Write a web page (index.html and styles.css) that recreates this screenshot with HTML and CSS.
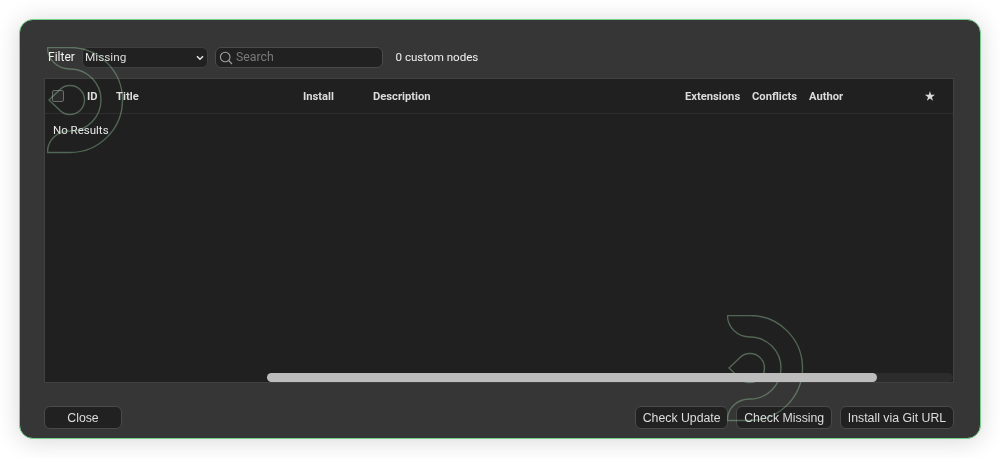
FILE: index.html
```html
<!DOCTYPE html>
<html lang="en">
<head>
<meta charset="utf-8">
<title>Custom Nodes Manager</title>
<link rel="stylesheet" href="styles.css">
</head>
<body>
<div class="dialog">
  <div class="toolbar">
    <span class="filter-label">Filter</span>
    <div class="select-wrap">
      <select class="filter-select"><option>Missing</option></select>
      <svg class="chevron" viewBox="0 0 8 6" width="8" height="6"><path d="M1 1.2 L4 4.2 L7 1.2"/></svg>
    </div>
    <label class="search">
      <svg class="search-icon" viewBox="0 0 14 14" width="14" height="14"><circle cx="6.2" cy="6" r="4.8"/><path d="M9.7 9.5 L13 13"/></svg>
      <input class="search-input" type="text" placeholder="Search">
    </label>
    <span class="count">0 custom nodes</span>
  </div>
  <div class="table">
    <div class="thead">
      <span class="cell"><span class="check"></span></span>
      <span class="cell">ID</span>
      <span class="cell">Title</span>
      <span class="cell">Install</span>
      <span class="cell">Description</span>
      <span class="cell">Extensions</span>
      <span class="cell">Conflicts</span>
      <span class="cell">Author</span>
      <span class="cell">★</span>
    </div>
    <div class="tbody"><div class="empty">No Results</div></div>
    <div class="scrolltrack"><div class="scrollthumb"></div><div class="scrollrest"></div></div>
  </div>
  <div class="footer">
    <button class="btn btn-close">Close</button>
    <div class="footer-right">
      <button class="btn">Check Update</button>
      <button class="btn">Check Missing</button>
      <button class="btn">Install via Git URL</button>
    </div>
  </div>
  <svg class="logo logo-top" viewBox="0 0 77 107" width="77" height="107"><use href="#logo-shape"/></svg>
  <svg class="logo logo-bottom" viewBox="0 0 77 107" width="77" height="107">
    <g id="logo-shape">
      <path d="M0.5 0.5 H23 A52.5 52.5 0 0 1 23 105.5 H0.5 C0.5 93 10 84 23 84 A31 31 0 0 0 23 22 C10 22 0.5 12 0.5 0.5 Z"/>
      <path d="M2 53 L12 43.5 C15 40 19 38.5 23 38.5 A14.5 14.5 0 0 1 23 67.5 C19 67.5 15 66 12 62.5 Z"/>
    </g>
  </svg>
</div>
</body>
</html>
```
FILE: styles.css
```css
* { box-sizing: border-box; }
html, body { margin: 0; height: 100%; }
body {
  background: #fff;
  padding: 19px 19px 18px 19px;
  font-family: Roboto, "Liberation Sans", Arial, sans-serif;
  font-size: 12px;
  color: #eee;
  overflow: hidden;
}
.dialog {
  position: relative;
  height: 420px;
  background: #363636;
  border: 1px solid #74d08c;
  border-radius: 14px;
  box-shadow: 0 2px 24px rgba(0, 0, 0, 0.16);
  padding: 27px 26px 9px 24px;
  display: flex;
  flex-direction: column;
  filter: blur(0.25px);
}
.toolbar {
  display: flex;
  align-items: center;
  height: 21px;
}
.filter-label { width: 38px; padding: 0 0 2px 4px; color: #f2f2f2; white-space: nowrap; }
.select-wrap { position: relative; width: 126px; height: 21px; }
.filter-select {
  appearance: none;
  width: 100%;
  height: 100%;
  background: #212121;
  color: #ddd;
  border: 1px solid #3f3f3f;
  border-radius: 6px;
  font: inherit;
  font-size: 11.8px;
  padding: 0 0 1px 2px;
  outline: none;
}
.chevron {
  position: absolute;
  right: 4px;
  top: 8px;
  fill: none;
  stroke: #e6e6e6;
  stroke-width: 1.5;
  pointer-events: none;
}
.search {
  margin-left: 7px;
  width: 168px;
  height: 21px;
  display: flex;
  align-items: center;
  gap: 3px;
  padding-left: 3px;
  background: #212121;
  border: 1px solid #4a4a4a;
  border-radius: 6px;
}
.search-icon { flex: none; fill: none; stroke: #a0a0a0; stroke-width: 1.1; }
.search-input {
  flex: 1;
  min-width: 0;
  background: none;
  border: none;
  outline: none;
  padding: 0 0 1px;
  font: inherit;
  font-size: 12.3px;
  color: #ddd;
}
.search-input::placeholder { color: #7a7a7a; }
.count { margin-left: 12.5px; padding-bottom: 2px; font-size: 11.6px; color: #f0f0f0; }
.table {
  margin-top: 10px;
  height: 306px;
  background: #202020;
  border: 1px solid #414141;
  display: flex;
  flex-direction: column;
}
.thead {
  height: 35px;
  flex: none;
  display: grid;
  grid-template-columns: 35px 29px 187px 70px 312px 67px 57px 116px 35px;
  align-items: center;
  border-bottom: 1px solid #2e2e2e;
  font-size: 11.2px;
  font-weight: 700;
  color: #dcdcdc;
}
.cell { padding-left: 7px; display: flex; align-items: center; }
.check {
  width: 12px;
  height: 12px;
  background: #2b2b2b;
  border: 1px solid #6b6b6b;
  border-radius: 2px;
}
.tbody { flex: 1; padding: 9px 8px; }
.empty { font-size: 11.5px; color: #eaeaea; }
.scrolltrack {
  flex: none;
  height: 9px;
  padding-left: 222px;
  display: flex;
}
.scrollthumb {
  position: relative;
  z-index: 1;
  flex: none;
  width: 610px;
  background: #bdbdbd;
  border-radius: 5px;
}
.scrollrest {
  flex: 1;
  margin-left: -5px;
  background: #2c2c2c;
  border-radius: 0 5px 5px 0;
}
.footer {
  margin-top: 23px;
  display: flex;
  justify-content: space-between;
}
.footer-right { display: flex; gap: 8px; }
.btn {
  height: 23px;
  padding: 0 6.8px;
  background: #212121;
  color: #ddd;
  border: 1px solid #4a4a4a;
  border-radius: 6px;
  font-family: "Liberation Sans", Arial, sans-serif;
  font-size: 12.3px;
}
.btn-close { width: 78px; }
.logo {
  position: absolute;
  fill: none;
  stroke: rgba(150, 200, 160, 0.42);
  stroke-width: 1.4;
  pointer-events: none;
}
.logo-top { left: 27px; top: 27px; }
.logo-bottom { left: 707px; top: 295px; }
```
